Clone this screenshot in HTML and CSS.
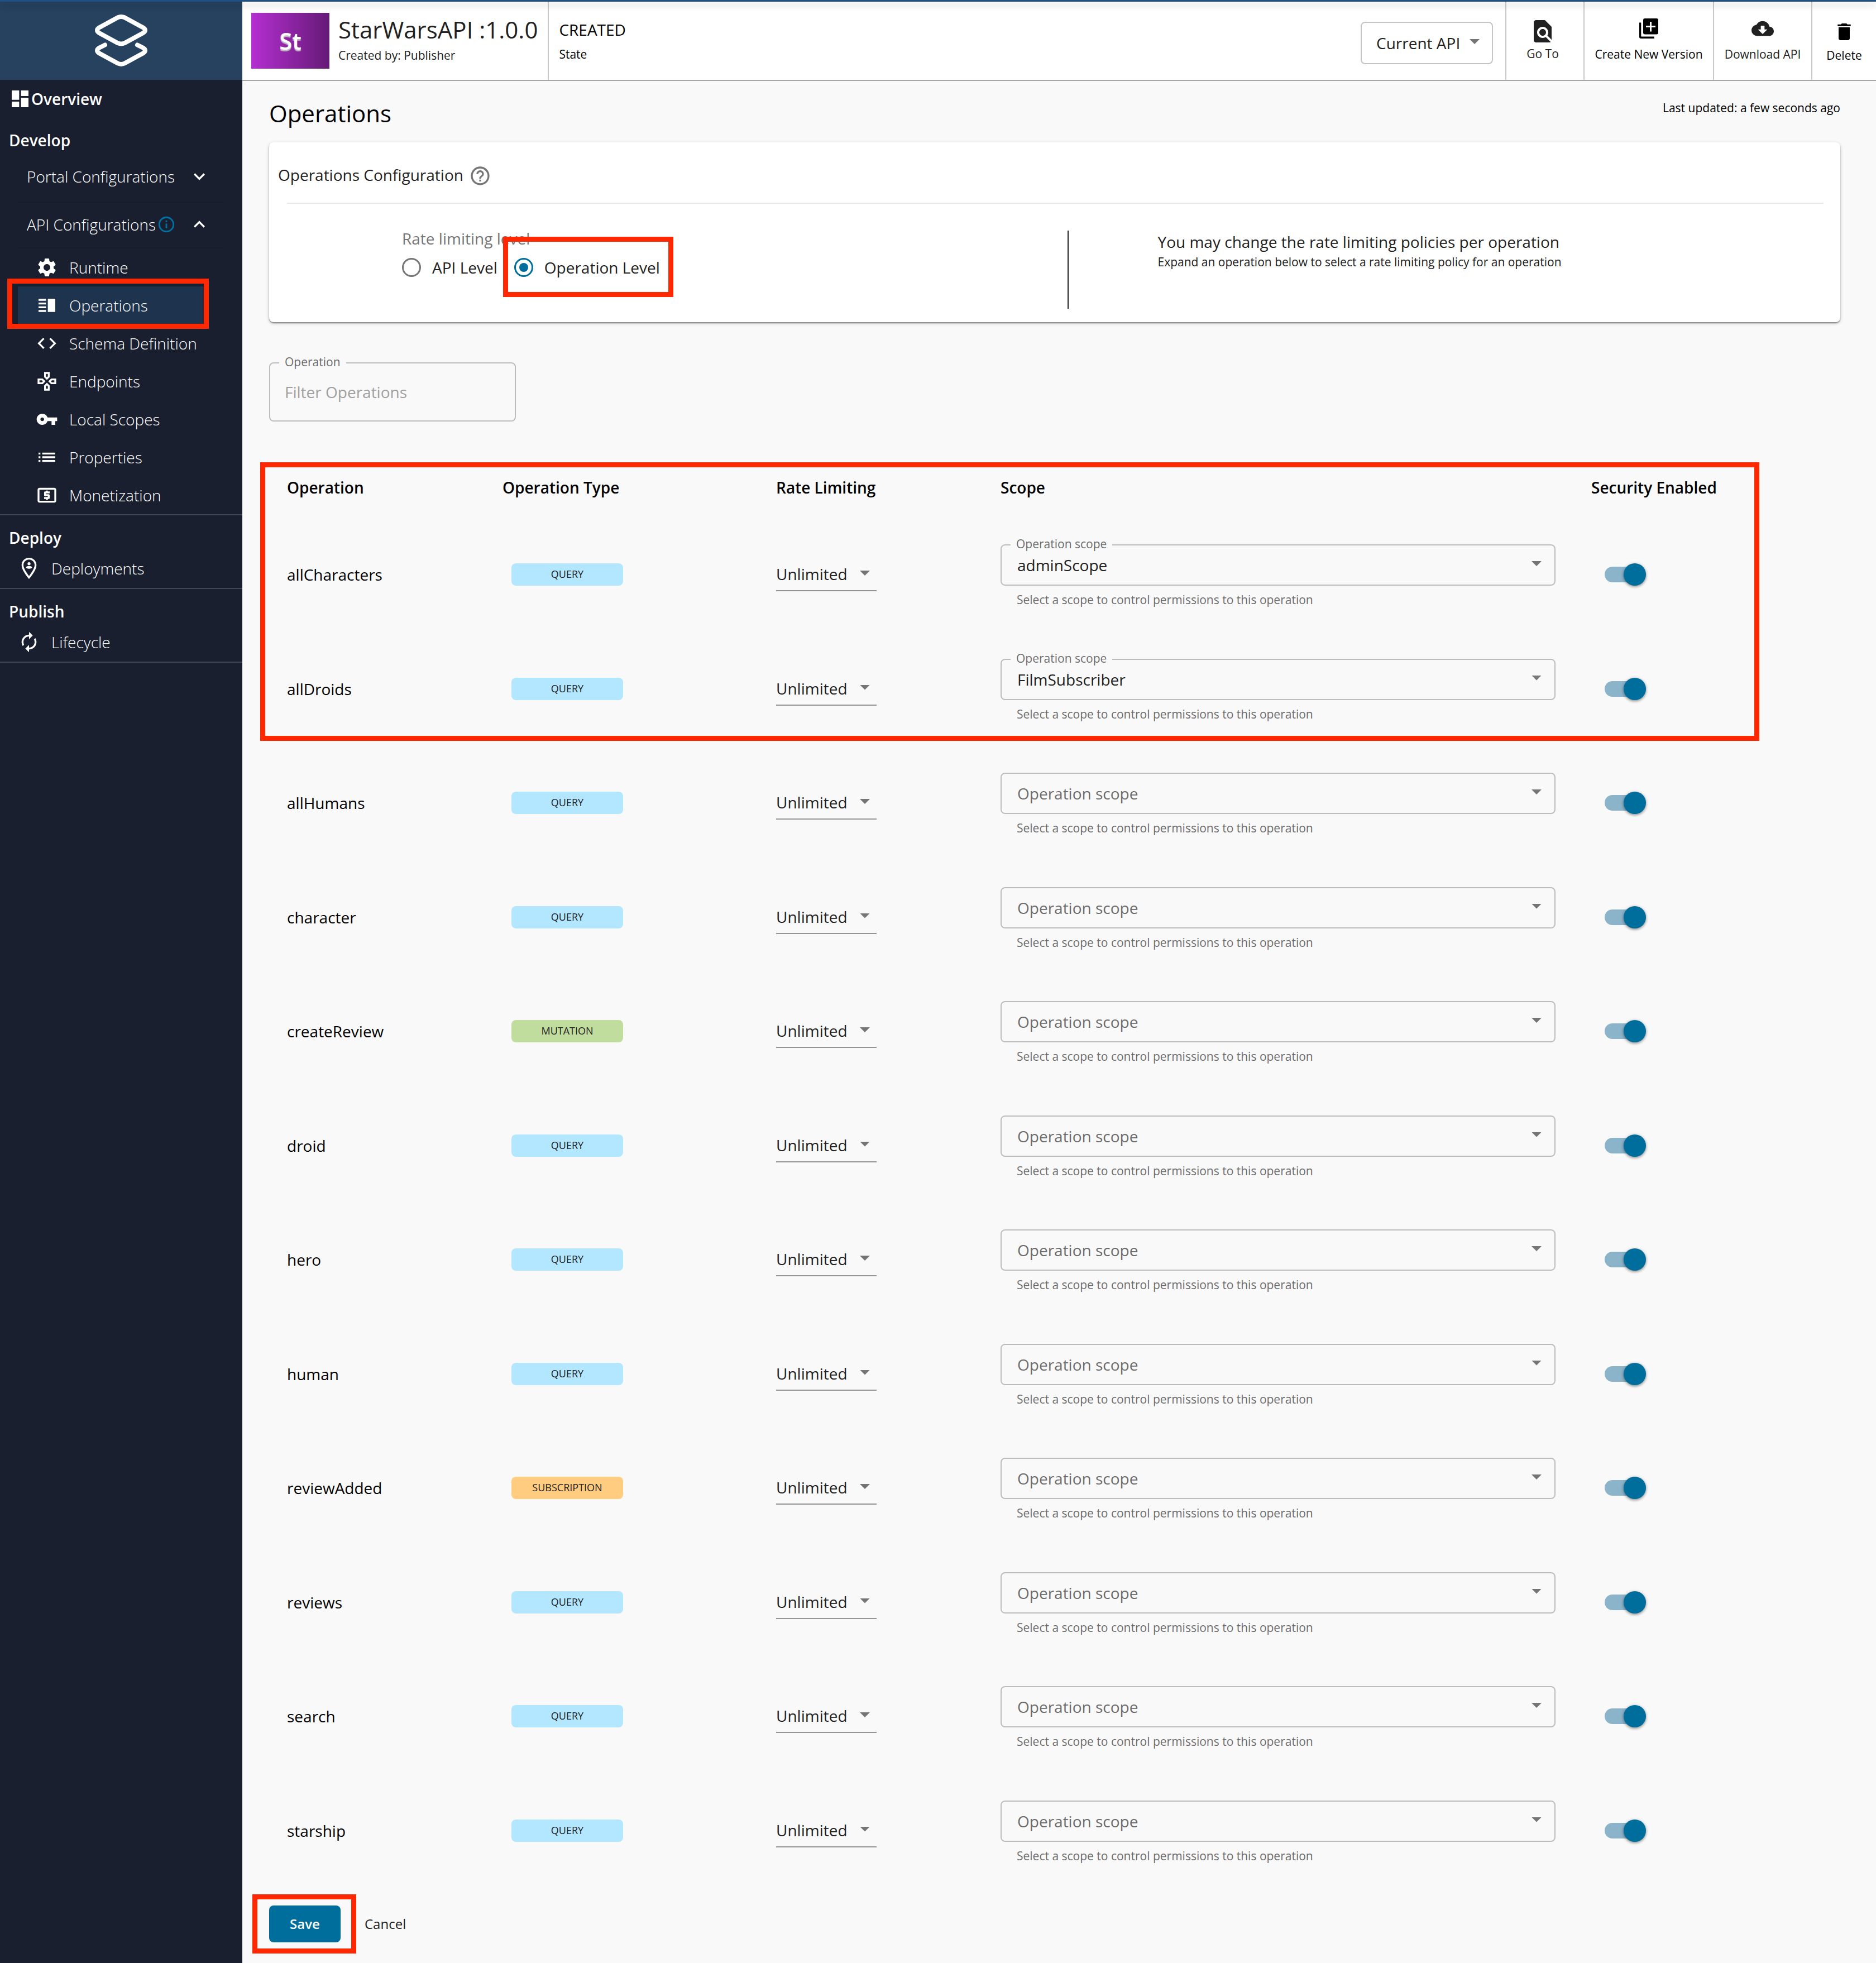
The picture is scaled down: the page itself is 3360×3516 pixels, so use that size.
FILE: index.html
```html
<!DOCTYPE html>
<html lang="en">
<head>
<meta charset="utf-8">
<title>StarWarsAPI - Operations</title>
<meta name="viewport" content="width=device-width, initial-scale=1">
<link rel="stylesheet" href="styles.css">
</head>
<body>
<div class="topbar"></div>
<div class="app">
  <nav class="sidebar" aria-label="API">
    <a class="logo" href="#" aria-label="Home">
      <svg class="logo-mark" viewBox="0 0 94 94" fill="none" stroke="#fff" stroke-width="8" stroke-linecap="round" stroke-linejoin="round">
        <path d="M41 5.200q6-2.400 12 0l33 18q8 5 0 10l-33 18q-6 2.800-12 0l-33-18q-8-5 0-10z"/>
        <path d="M18 54.500l-10 5q-8 5 0 10l33 18q6 2.800 12 0l33-18q8-5 0-10l-10-5"/>
      </svg>
    </a>
    <a class="nav-overview" href="#">
      <svg class="icon" viewBox="0 0 24 24"><path d="M3 13h8V3H3v10zm0 8h8v-6H3v6zm10 0h8V11h-8v10zm0-18v6h8V3h-8z"/></svg>
      <span>Overview</span>
    </a>
    <h2 class="nav-title nav-title-first">Develop</h2>
    <button class="accordion accordion-closed" type="button">
      <span>Portal Configurations</span>
      <svg class="icon chevron" viewBox="0 0 24 24"><path d="M16.590 8.590L12 13.170 7.410 8.590 6 10l6 6 6-6z"/></svg>
    </button>
    <button class="accordion accordion-open" type="button" aria-expanded="true">
      <span>API Configurations</span>
      <svg class="icon info" viewBox="0 0 24 24"><path d="M11 7h2v2h-2zm0 4h2v6h-2zm1-9C6.480 2 2 6.480 2 12s4.480 10 10 10 10-4.480 10-10S17.520 2 12 2zm0 18c-4.410 0-8-3.590-8-8s3.590-8 8-8 8 3.590 8 8-3.590 8-8 8z"/></svg>
      <svg class="icon chevron" viewBox="0 0 24 24"><path d="M12 8l-6 6 1.410 1.410L12 10.830l4.590 4.580L18 14z"/></svg>
    </button>
    <ul class="nav-list nav-sub">
      <li><a class="nav-item" href="#"><svg class="icon" viewBox="0 0 24 24"><path d="M19.140 12.940c.04-.3.060-.61.060-.94 0-.32-.02-.64-.07-.94l2.030-1.580c.18-.14.23-.41.120-.61l-1.920-3.320c-.12-.22-.37-.29-.59-.22l-2.390.96c-.5-.38-1.030-.7-1.620-.94l-.36-2.540c-.04-.24-.24-.41-.48-.41h-3.840c-.24 0-.43.170-.47.410l-.36 2.540c-.59.240-1.130.570-1.620.940l-2.390-.96c-.22-.08-.47 0-.59.220L2.740 8.870c-.12.210-.08.470.120.610l2.030 1.580c-.05.3-.09.630-.09.940s.020.640.070.940l-2.030 1.580c-.18.140-.23.410-.12.610l1.920 3.320c.120.220.370.290.590.220l2.390-.96c.5.380 1.030.7 1.620.940l.360 2.540c.050.240.240.410.480.410h3.840c.240 0 .440-.17.470-.41l.360-2.540c.590-.24 1.130-.56 1.620-.94l2.390.96c.220.080.470 0 .590-.22l1.920-3.320c.120-.22.070-.47-.12-.61l-2.010-1.580zM12 15.600c-1.980 0-3.600-1.620-3.600-3.600s1.620-3.600 3.600-3.600 3.600 1.620 3.600 3.600-1.620 3.600-3.600 3.600z"/></svg><span>Runtime</span></a></li>
      <li><a class="nav-item nav-active" href="#" aria-current="page"><svg class="icon" viewBox="0 0 24 24"><path d="M3 15h8v-2H3v2zm0 4h8v-2H3v2zm0-8h8V9H3v2zm0-6v2h8V5H3zm10 0h8v14h-8V5z"/></svg><span>Operations</span><i class="mark mark-nav"></i></a></li>
      <li><a class="nav-item" href="#"><svg class="icon" viewBox="0 0 24 24"><path d="M9.400 16.600L4.800 12l4.600-4.600L8 6l-6 6 6 6 1.400-1.400zm5.200 0l4.600-4.600-4.600-4.600L16 6l6 6-6 6-1.400-1.400z"/></svg><span>Schema Definition</span></a></li>
      <li><a class="nav-item" href="#"><svg class="icon" viewBox="0 0 24 24"><path d="M13 4v2.670l-1 1-1-1V4h2m7 7v2h-2.670l-1-1 1-1H20M6.670 11l1 1-1 1H4v-2h2.670M12 16.330l1 1V20h-2v-2.670l1-1M15 2H9v5.500l3 3 3-3V2zm7 7h-5.500l-3 3 3 3H22V9zM7.500 9H2v6h5.500l3-3-3-3zm4.500 4.500l-3 3V22h6v-5.500l-3-3z"/></svg><span>Endpoints</span></a></li>
      <li><a class="nav-item" href="#"><svg class="icon" viewBox="0 0 24 24"><path d="M12.650 10C11.830 7.670 9.610 6 7 6c-3.310 0-6 2.690-6 6s2.690 6 6 6c2.610 0 4.830-1.670 5.650-4H17v4h4v-4h2v-4H12.650zM7 14c-1.100 0-2-.9-2-2s.9-2 2-2 2 .9 2 2-.9 2-2 2z"/></svg><span>Local Scopes</span></a></li>
      <li><a class="nav-item" href="#"><svg class="icon" viewBox="0 0 24 24"><path d="M3 13h2v-2H3v2zm0 4h2v-2H3v2zm0-8h2V7H3v2zm4 4h14v-2H7v2zm0 4h14v-2H7v2zM7 7v2h14V7H7z"/></svg><span>Properties</span></a></li>
      <li><a class="nav-item" href="#"><svg class="icon" viewBox="0 0 24 24"><path d="M11 17h2v-1h1c.55 0 1-.45 1-1v-3c0-.55-.45-1-1-1h-3v-1h4V8h-2V7h-2v1h-1c-.55 0-1 .45-1 1v3c0 .55.45 1 1 1h3v1H9v2h2v1zm9-13H4c-1.110 0-1.990.89-1.990 2L2 18c0 1.110.89 2 2 2h16c1.110 0 2-.89 2-2V6c0-1.110-.89-2-2-2zm0 14H4V6h16v12z"/></svg><span>Monetization</span></a></li>
    </ul>
    <section class="nav-section">
      <h2 class="nav-title">Deploy</h2>
      <ul class="nav-list">
        <li><a class="nav-item" href="#"><svg class="icon" viewBox="0 0 24 24"><path fill-rule="evenodd" d="M12 .6C7.600.6 4 4.100 4 8.500 4 14.500 12 23.400 12 23.400s8-8.900 8-14.900C20 4.100 16.400.6 12 .6zm0 2c3.300 0 6 2.600 6 5.900 0 3.600-3.900 9-6 11.700-2.100-2.700-6-8.100-6-11.700 0-3.300 2.700-5.900 6-5.900z"/><circle cx="12" cy="7" r="1.600"/><ellipse cx="12" cy="11" rx="3.200" ry="1.500"/></svg><span>Deployments</span></a></li>
      </ul>
    </section>
    <section class="nav-section nav-section-last">
      <h2 class="nav-title">Publish</h2>
      <ul class="nav-list">
        <li><a class="nav-item" href="#"><svg class="icon" viewBox="0 0 24 24"><path d="M12 6v3l4-4-4-4v3c-4.420 0-8 3.580-8 8 0 1.570.46 3.030 1.240 4.260L6.700 14.800c-.45-.83-.7-1.790-.7-2.800 0-3.310 2.690-6 6-6zm6.760 1.740L17.300 9.200c.440.840.7 1.790.7 2.800 0 3.310-2.690 6-6 6v-3l-4 4 4 4v-3c4.420 0 8-3.580 8-8 0-1.570-.46-3.030-1.240-4.260z"/></svg><span>Lifecycle</span></a></li>
      </ul>
    </section>
  </nav>

  <div class="page">
    <header class="header">
      <div class="api">
        <div class="thumb">St</div>
        <div class="api-text">
          <h1 class="api-name">StarWarsAPI :1.0.0</h1>
          <p class="caption">Created by: Publisher</p>
        </div>
      </div>
      <div class="state">
        <p class="state-value">CREATED</p>
        <p class="caption">State</p>
      </div>
      <div class="version">
        <span class="drop drop-version"><select class="select select-version" aria-label="Version"><option>Current API</option></select></span>
      </div>
      <button class="tool tool-goto" type="button">
        <svg class="icon icon-large" viewBox="0 0 24 24"><path d="M20 19.590V8l-6-6H6c-1.100 0-1.990.9-1.990 2L4 20c0 1.100.89 2 1.990 2H18c.45 0 .85-.15 1.190-.4l-4.430-4.430c-.8.520-1.740.830-2.760.830-2.760 0-5-2.240-5-5s2.240-5 5-5 5 2.240 5 5c0 1.020-.31 1.960-.83 2.750L20 19.590zM9 13c0 1.660 1.340 3 3 3s3-1.340 3-3-1.340-3-3-3-3 1.340-3 3z"/></svg>
        <span>Go To</span>
      </button>
      <button class="tool tool-create" type="button">
        <svg class="icon" viewBox="0 0 40 40"><path fill-rule="evenodd" d="M13 2h21q3 0 3 3v22.500q0 3-3 3H13q-3 0-3-3V5q0-3 3-3zm9 6v7h-7v3h7v7.500h3V18h7v-3h-7V8z"/><path d="M3 9.500h3.300v25h23.500V38H6q-3 0-3-3z"/></svg>
        <span>Create New Version</span>
      </button>
      <button class="tool tool-download" type="button">
        <svg class="icon" viewBox="0 0 24 24"><path d="M19.350 10.040C18.670 6.590 15.640 4 12 4 9.110 4 6.600 5.640 5.350 8.040 2.340 8.360 0 10.910 0 14c0 3.310 2.690 6 6 6h13c2.760 0 5-2.240 5-5 0-2.640-2.050-4.780-4.650-4.960zM17 13l-5 5-5-5h3V9h4v4h3z"/></svg>
        <span>Download API</span>
      </button>
      <button class="tool tool-delete" type="button">
        <svg class="icon" viewBox="0 0 24 24"><path d="M6 19c0 1.100.9 2 2 2h8c1.100 0 2-.9 2-2V7H6v12zM19 4h-3.500l-1-1h-5l-1 1H5v2h14V4z"/></svg>
        <span>Delete</span>
      </button>
    </header>

    <main class="content">
      <div class="heading">
        <h2 class="heading-title">Operations</h2>
        <p class="caption">Last updated: a few seconds ago</p>
      </div>

      <section class="card">
        <div class="card-head">
          <h3 class="card-title">Operations Configuration</h3>
          <svg class="icon help" viewBox="0 0 24 24"><path d="M11 18h2v-2h-2v2zm1-16C6.480 2 2 6.480 2 12s4.480 10 10 10 10-4.480 10-10S17.520 2 12 2zm0 18c-4.410 0-8-3.590-8-8s3.590-8 8-8 8 3.590 8 8-3.590 8-8 8zm0-14c-2.210 0-4 1.790-4 4h2c0-1.100.9-2 2-2s2 .9 2 2c0 2-3 1.750-3 5h2c0-2.250 3-2.500 3-5 0-2.210-1.790-4-4-4z"/></svg>
        </div>
        <hr class="card-rule">
        <div class="card-body">
          <fieldset class="level">
            <legend class="level-title">Rate limiting level</legend>
            <div class="level-options">
              <label class="level-option"><input class="radio" type="radio" name="level"><span>API Level</span></label>
              <label class="level-option"><input class="radio" type="radio" name="level" checked><span>Operation Level</span><i class="mark mark-level"></i></label>
            </div>
          </fieldset>
          <div class="note">
            <p class="note-title">You may change the rate limiting policies per operation</p>
            <p class="caption">Expand an operation below to select a rate limiting policy for an operation</p>
          </div>
        </div>
      </section>

      <div class="field filter">
        <label class="field-label" for="filter">Operation</label>
        <input class="filter-input" id="filter" type="text" placeholder="Filter Operations">
      </div>

      <div class="table-wrap">
        <i class="mark mark-table"></i>
        <table class="table">
          <colgroup><col class="col-name"><col class="col-type"><col class="col-rate"><col><col class="col-security"></colgroup>
          <thead>
            <tr><th>Operation</th><th>Operation Type</th><th>Rate Limiting</th><th>Scope</th><th>Security Enabled</th></tr>
          </thead>
          <tbody>
            <tr>
              <td>allCharacters</td>
              <td><span class="tag">QUERY</span></td>
              <td><span class="drop drop-rate"><select class="select select-rate" aria-label="Rate limiting"><option>Unlimited</option></select></span></td>
              <td><div class="scope"><div class="field"><label class="field-label" for="scope1">Operation scope</label><span class="drop drop-scope"><select class="select select-scope" id="scope1"><option>adminScope</option></select></span></div><p class="helper">Select a scope to control permissions to this operation</p></div></td>
              <td><input class="switch" type="checkbox" aria-label="Security enabled" checked></td>
            </tr>
            <tr>
              <td>allDroids</td>
              <td><span class="tag">QUERY</span></td>
              <td><span class="drop drop-rate"><select class="select select-rate" aria-label="Rate limiting"><option>Unlimited</option></select></span></td>
              <td><div class="scope"><div class="field"><label class="field-label" for="scope2">Operation scope</label><span class="drop drop-scope"><select class="select select-scope" id="scope2"><option>FilmSubscriber</option></select></span></div><p class="helper">Select a scope to control permissions to this operation</p></div></td>
              <td><input class="switch" type="checkbox" aria-label="Security enabled" checked></td>
            </tr>
            <tr>
              <td>allHumans</td>
              <td><span class="tag">QUERY</span></td>
              <td><span class="drop drop-rate"><select class="select select-rate" aria-label="Rate limiting"><option>Unlimited</option></select></span></td>
              <td><div class="scope"><span class="drop drop-scope"><select class="select select-scope select-empty" aria-label="Operation scope"><option>Operation scope</option></select></span><p class="helper">Select a scope to control permissions to this operation</p></div></td>
              <td><input class="switch" type="checkbox" aria-label="Security enabled" checked></td>
            </tr>
            <tr>
              <td>character</td>
              <td><span class="tag">QUERY</span></td>
              <td><span class="drop drop-rate"><select class="select select-rate" aria-label="Rate limiting"><option>Unlimited</option></select></span></td>
              <td><div class="scope"><span class="drop drop-scope"><select class="select select-scope select-empty" aria-label="Operation scope"><option>Operation scope</option></select></span><p class="helper">Select a scope to control permissions to this operation</p></div></td>
              <td><input class="switch" type="checkbox" aria-label="Security enabled" checked></td>
            </tr>
            <tr>
              <td>createReview</td>
              <td><span class="tag tag-mutation">MUTATION</span></td>
              <td><span class="drop drop-rate"><select class="select select-rate" aria-label="Rate limiting"><option>Unlimited</option></select></span></td>
              <td><div class="scope"><span class="drop drop-scope"><select class="select select-scope select-empty" aria-label="Operation scope"><option>Operation scope</option></select></span><p class="helper">Select a scope to control permissions to this operation</p></div></td>
              <td><input class="switch" type="checkbox" aria-label="Security enabled" checked></td>
            </tr>
            <tr>
              <td>droid</td>
              <td><span class="tag">QUERY</span></td>
              <td><span class="drop drop-rate"><select class="select select-rate" aria-label="Rate limiting"><option>Unlimited</option></select></span></td>
              <td><div class="scope"><span class="drop drop-scope"><select class="select select-scope select-empty" aria-label="Operation scope"><option>Operation scope</option></select></span><p class="helper">Select a scope to control permissions to this operation</p></div></td>
              <td><input class="switch" type="checkbox" aria-label="Security enabled" checked></td>
            </tr>
            <tr>
              <td>hero</td>
              <td><span class="tag">QUERY</span></td>
              <td><span class="drop drop-rate"><select class="select select-rate" aria-label="Rate limiting"><option>Unlimited</option></select></span></td>
              <td><div class="scope"><span class="drop drop-scope"><select class="select select-scope select-empty" aria-label="Operation scope"><option>Operation scope</option></select></span><p class="helper">Select a scope to control permissions to this operation</p></div></td>
              <td><input class="switch" type="checkbox" aria-label="Security enabled" checked></td>
            </tr>
            <tr>
              <td>human</td>
              <td><span class="tag">QUERY</span></td>
              <td><span class="drop drop-rate"><select class="select select-rate" aria-label="Rate limiting"><option>Unlimited</option></select></span></td>
              <td><div class="scope"><span class="drop drop-scope"><select class="select select-scope select-empty" aria-label="Operation scope"><option>Operation scope</option></select></span><p class="helper">Select a scope to control permissions to this operation</p></div></td>
              <td><input class="switch" type="checkbox" aria-label="Security enabled" checked></td>
            </tr>
            <tr>
              <td>reviewAdded</td>
              <td><span class="tag tag-subscription">SUBSCRIPTION</span></td>
              <td><span class="drop drop-rate"><select class="select select-rate" aria-label="Rate limiting"><option>Unlimited</option></select></span></td>
              <td><div class="scope"><span class="drop drop-scope"><select class="select select-scope select-empty" aria-label="Operation scope"><option>Operation scope</option></select></span><p class="helper">Select a scope to control permissions to this operation</p></div></td>
              <td><input class="switch" type="checkbox" aria-label="Security enabled" checked></td>
            </tr>
            <tr>
              <td>reviews</td>
              <td><span class="tag">QUERY</span></td>
              <td><span class="drop drop-rate"><select class="select select-rate" aria-label="Rate limiting"><option>Unlimited</option></select></span></td>
              <td><div class="scope"><span class="drop drop-scope"><select class="select select-scope select-empty" aria-label="Operation scope"><option>Operation scope</option></select></span><p class="helper">Select a scope to control permissions to this operation</p></div></td>
              <td><input class="switch" type="checkbox" aria-label="Security enabled" checked></td>
            </tr>
            <tr>
              <td>search</td>
              <td><span class="tag">QUERY</span></td>
              <td><span class="drop drop-rate"><select class="select select-rate" aria-label="Rate limiting"><option>Unlimited</option></select></span></td>
              <td><div class="scope"><span class="drop drop-scope"><select class="select select-scope select-empty" aria-label="Operation scope"><option>Operation scope</option></select></span><p class="helper">Select a scope to control permissions to this operation</p></div></td>
              <td><input class="switch" type="checkbox" aria-label="Security enabled" checked></td>
            </tr>
            <tr>
              <td>starship</td>
              <td><span class="tag">QUERY</span></td>
              <td><span class="drop drop-rate"><select class="select select-rate" aria-label="Rate limiting"><option>Unlimited</option></select></span></td>
              <td><div class="scope"><span class="drop drop-scope"><select class="select select-scope select-empty" aria-label="Operation scope"><option>Operation scope</option></select></span><p class="helper">Select a scope to control permissions to this operation</p></div></td>
              <td><input class="switch" type="checkbox" aria-label="Security enabled" checked></td>
            </tr>
          </tbody>
        </table>
      </div>

      <div class="actions">
        <span class="save-wrap"><button class="button button-save" type="button">Save</button><i class="mark mark-save"></i></span>
        <button class="button button-cancel" type="button">Cancel</button>
      </div>
    </main>
  </div>
</div>
</body>
</html>
```
FILE: styles.css
```css
* { box-sizing: border-box; }

body {
  margin: 0;
  min-height: 100vh;
  display: flex;
  flex-direction: column;
  background: #f9f9f9;
  color: #000;
  font-family: "Open Sans", "Noto Sans", sans-serif;
  font-size: 28px;
  line-height: 40px;
}

h1, h2, h3, p, ul, fieldset { margin: 0; padding: 0; }
h1, h2, h3 { font-weight: 400; }
ul { list-style: none; }
a { color: inherit; text-decoration: none; }
button, input, select { font: inherit; color: inherit; }
button { border: 0; background: none; padding: 0; cursor: pointer; }

.icon { display: block; flex: none; width: 40px; height: 40px; fill: currentColor; }
.icon-large { width: 48px; height: 48px; }
.caption { font-size: 21px; line-height: 28px; }

/* Red highlight frames laid over the page */
.mark {
  position: absolute;
  border: 9px solid #ff2800;
  pointer-events: none;
  z-index: 2;
}

.topbar {
  position: relative;
  z-index: 1;
  height: 3px;
  background: #1f5088;
  box-shadow: 0 4px 8px -2px rgba(0, 0, 0, .2), 0 8px 10px rgba(0, 0, 0, .14), 0 2px 20px rgba(0, 0, 0, .12);
}

.app { flex: 1; display: flex; }

/* Sidebar */
.sidebar { flex: none; width: 434px; background: #1a1f2f; color: #fff; }
.logo { display: flex; justify-content: center; align-items: center; height: 140px; background: #27425f; }
.logo-mark { width: 94px; height: 94px; }
.nav-overview { display: flex; align-items: center; height: 68px; padding-left: 16px; font-weight: 600; }
.nav-title { padding: 18px 0 0 16px; font-size: 28px; line-height: 44px; font-weight: 600; }
.nav-title-first { padding-bottom: 8px; }

.accordion {
  display: flex;
  align-items: center;
  width: 369px;
  height: 82px;
  margin-left: 32px;
  padding: 0 24px 0 16px;
  border-bottom: 2px solid #171b2b;
  font-weight: 300;
}
.accordion-closed { padding-bottom: 10px; }
.accordion-open { padding-bottom: 2px; }
.chevron { margin-left: auto; }
.info { width: 34px; height: 34px; margin-left: 2px; color: #0070a0; }

.nav-item { position: relative; display: flex; align-items: center; gap: 20px; height: 68px; padding-left: 32px; font-weight: 300; }
.nav-sub { padding: 0 68px 0 32px; }
.nav-sub .nav-item { white-space: nowrap; }
.nav-active { background: #1e334e; }
.mark-nav { inset: -14px -8px -8px -19px; }
.nav-section { padding-bottom: 2px; border-top: 2px solid #404554; }
.nav-section .nav-item { height: 66px; }
.nav-section-last { border-bottom: 2px solid #404554; }

/* Header */
.page { flex: 1; min-width: 0; }
.header { display: flex; height: 142px; background: #fff; border-bottom: 2px solid #a6a6a6; }
.api { display: flex; gap: 16px; padding: 20px 18px 0 16px; color: #212121; }
.thumb {
  display: flex;
  justify-content: center;
  align-items: center;
  width: 140px;
  height: 100px;
  background: linear-gradient(90deg, #b52fd1, #651a77);
  color: #fff;
  font-size: 42px;
  font-weight: 600;
  text-shadow: 0 3px 1px #c3b5c6;
}
.api-text { padding-top: 2px; }
.api-name { font-size: 42px; line-height: 56px; margin-bottom: 4px; }
.state { padding: 28px 18px 0; border-left: 2px solid #c9c9c9; }
.state-value { line-height: 44px; margin-bottom: 8px; }
.version { display: flex; align-items: center; margin-left: auto; padding: 8px 22px 0 0; }

.tool {
  display: flex;
  flex-direction: column;
  align-items: center;
  justify-content: center;
  gap: 12px;
  border-left: 2px solid #c9c9c9;
  padding: 0 16px 4px;
  font-size: 21px;
  line-height: 28px;
}
.tool-goto { width: 140px; gap: 2px; padding: 0 24px 4px 16px; color: #212121; }
.tool-create { width: 232px; }
.tool-download { width: 176px; color: #212121; }
.tool-delete { width: 116px; gap: 8px; padding: 4px 16px 0; }

/* Drop-downs */
.drop { position: relative; display: block; }
.drop::after {
  content: "";
  position: absolute;
  width: 18px;
  height: 9px;
  background: #757575;
  clip-path: polygon(0 0, 100% 0, 50% 100%);
  pointer-events: none;
}
.select { display: block; width: 100%; appearance: none; background: transparent; border: 0; border-radius: 0; color: #212121; }
.drop-version { width: 237px; }
.drop-version::after { top: 31px; right: 24px; }
.select-version { height: 76px; padding-left: 26px; border: 2px solid #c4c4c4; border-radius: 8px; }
.drop-rate { width: 180px; }
.drop-rate::after { top: 23px; right: 12px; }
.select-rate { height: 60px; border-bottom: 2px solid #949494; }
.drop-scope::after { top: 30px; right: 25px; }
.select-scope { height: 74px; padding-left: 28px; border: 2px solid #bdbdbd; border-radius: 8px; }
.select-empty { color: #6c6c6c; }

/* Content */
.content { padding: 28px 64px 37px 48px; }
.heading { display: flex; justify-content: space-between; height: 82px; }
.heading-title { font-size: 42px; line-height: 60px; }
.heading .caption { padding-top: 6px; }

.card {
  padding: 40px 0 24px;
  background: #fff;
  border-radius: 8px;
  color: #212121;
  box-shadow: 0 2px 2px rgba(0, 0, 0, .35), 0 2px 6px rgba(0, 0, 0, .2);
}
.card-head { display: flex; align-items: flex-start; gap: 10px; padding-left: 16px; }
.card-title { font-size: 28px; line-height: 36px; }
.help { color: #757575; }
.card-rule { height: 2px; margin: 28px 30px 48px 32px; border: 0; background: #e8e8e8; }
.card-body { display: grid; grid-template-columns: 508fr 492fr; }
.level { border: 0; padding-left: 238px; min-width: 0; }
.level-title { padding: 0; line-height: 28px; color: #757575; }
.level-options { display: flex; gap: 30px; padding-top: 18px; }
.level-option { position: relative; display: flex; align-items: center; gap: 20px; }
.radio {
  appearance: none;
  display: grid;
  place-items: center;
  width: 34px;
  height: 34px;
  margin: 0;
  border: 3px solid #757575;
  border-radius: 50%;
}
.radio:checked { border-color: #006e9c; }
.radio:checked::before { content: ""; width: 16px; height: 16px; border-radius: 50%; background: #006e9c; }
.mark-level { inset: -35px -24px -33px -20px; }
.note { height: 140px; padding-left: 160px; border-left: 2px solid #212121; }
.note-title { padding-bottom: 2px; }

.field { position: relative; }
.field-label {
  position: absolute;
  top: -13px;
  left: 18px;
  padding: 0 10px;
  background: #f9f9f9;
  color: #6c6c6c;
  font-size: 21px;
  line-height: 24px;
  z-index: 1;
}
.filter { width: 442px; margin: 72px 0 64px; }
.filter-input { display: block; width: 100%; height: 106px; padding: 0 26px; border: 2px solid #bdbdbd; border-radius: 8px; background: transparent; }
.filter-input::placeholder { color: #a0a0a0; opacity: 1; }

.table-wrap { position: relative; }
.mark-table { top: 9px; left: -16px; right: 145px; height: 499px; }
.table { width: 100%; table-layout: fixed; border-collapse: collapse; }
.col-name { width: 386px; }
.col-type { width: 490px; }
.col-rate { width: 402px; }
.col-security { width: 478px; }
.table th { height: 108px; padding: 0 0 0 32px; text-align: left; font-weight: 600; }
.table td { height: 204px; padding: 0 0 0 32px; vertical-align: middle; }
.table tr:nth-child(even) td { height: 205px; }

.tag {
  display: block;
  width: 200px;
  height: 40px;
  margin-left: 16px;
  border-radius: 8px;
  background: #b3e7ff;
  color: #212121;
  font-size: 18px;
  line-height: 38px;
  text-align: center;
}
.tag-mutation { background: #c1dd9d; }
.tag-subscription { background: #ffcc80; }
.scope { padding: 8px 32px 0 0; }
.helper { margin: 8px 0 0 29px; color: #6c6c6c; font-size: 21px; line-height: 34px; }

.switch { appearance: none; display: grid; align-items: center; width: 74px; height: 40px; margin: 0 0 0 24px; }
.switch::before, .switch::after { content: ""; grid-area: 1 / 1; }
.switch::before { width: 68px; height: 28px; border-radius: 14px; background: #8bb3c9; }
.switch::after {
  justify-self: end;
  width: 40px;
  height: 40px;
  border-radius: 50%;
  background: #006e9c;
  box-shadow: 0 2px 4px rgba(0, 0, 0, .3), 0 1px 6px rgba(0, 0, 0, .2);
}

.actions { display: flex; gap: 43px; padding-top: 32px; }
.save-wrap { position: relative; }
.button { display: block; height: 66px; font-size: 24px; }
.button-save { width: 128px; border-radius: 8px; background: #006e9c; color: #fff; font-weight: 600; }
.button-cancel { color: #212121; }
.mark-save { inset: -20px -28px -20px -30px; }
```
